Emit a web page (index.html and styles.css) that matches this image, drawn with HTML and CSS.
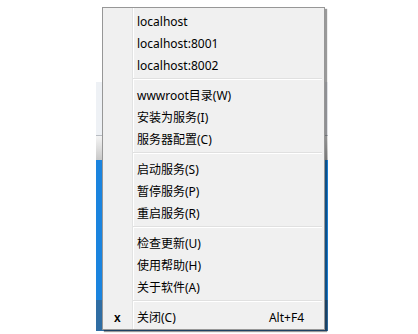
FILE: index.html
```html
<!DOCTYPE html>
<html>
<head>
<meta charset="utf-8">
<link rel="stylesheet" href="styles.css">
</head>
<body>
<div class="desktop">
  <div class="backwin">
    <div class="band band-white"></div>
    <div class="band band-panel"></div>
    <div class="band band-line"></div>
    <div class="band band-grad"></div>
    <div class="band band-blue"></div>
    <div class="band band-task"></div>
  </div>
  <div class="menu">
    <div class="item">localhost</div>
    <div class="item">localhost:8001</div>
    <div class="item">localhost:8002</div>
    <div class="sep"></div>
    <div class="item">wwwroot目录(W)</div>
    <div class="item">安装为服务(I)</div>
    <div class="item">服务器配置(C)</div>
    <div class="sep"></div>
    <div class="item">启动服务(S)</div>
    <div class="item">暂停服务(P)</div>
    <div class="item">重启服务(R)</div>
    <div class="sep"></div>
    <div class="item">检查更新(U)</div>
    <div class="item">使用帮助(H)</div>
    <div class="item">关于软件(A)</div>
    <div class="sep"></div>
    <div class="item"><span class="icon">x</span><span class="label">关闭(C)</span><span class="key">Alt+F4</span></div>
  </div>
</div>
</body>
</html>
```

FILE: styles.css
```css
html, body {
  margin: 0;
  padding: 0;
  background: #ffffff;
}

.desktop {
  position: relative;
  width: 418px;
  height: 334px;
  overflow: hidden;
  font-family: "Noto Sans", "Noto Sans CJK SC", sans-serif;
  font-size: 12px;
  color: #000;
}

.backwin {
  position: absolute;
  left: 96px;
  top: 0;
  width: 232px;
  height: 331px;
  display: flex;
  flex-direction: column;
}

.band-white { height: 82px; background: #ffffff; }
.band-panel { height: 53px; background: #eef1f5; }
.band-line { height: 1px; background: #b8bcc2; }
.band-grad { height: 24px; background: linear-gradient(#f4f4f4, #c8c8c8); }
.band-blue { height: 140px; background: #1b84de; }
.band-task { height: 31px; background: #2f6da3; }

.menu {
  position: absolute;
  left: 102px;
  top: 7px;
  width: 221px;
  padding: 1px 0 2px 0;
  border: 1px solid #979797;
  background: linear-gradient(to right, #f0f0f0 29px, #e2e3e3 29px, #e2e3e3 30px, #ffffff 30px, #ffffff 31px, #f0f0f0 31px);
  box-shadow: 2px 2px 1px rgba(0, 0, 0, 0.4);
}

.item {
  height: 20px;
  line-height: 22px;
  padding-top: 2px;
  padding-left: 34px;
  padding-right: 20px;
  display: flex;
  position: relative;
  white-space: nowrap;
}

.item .label {
  flex: 1;
}

.item .icon {
  position: absolute;
  left: 11px;
  top: 2px;
  font-weight: bold;
  font-family: "Liberation Sans", sans-serif;
  font-size: 12px;
}

.item .key {
  font-family: "Noto Sans", sans-serif;
}

.sep {
  height: 8px;
  margin-left: 30px;
  margin-right: 2px;
  box-sizing: border-box;
  padding-top: 3px;
}

.sep::before {
  content: "";
  display: block;
  height: 1px;
  background: #e0e0e0;
  border-bottom: 1px solid #ffffff;
}
```
